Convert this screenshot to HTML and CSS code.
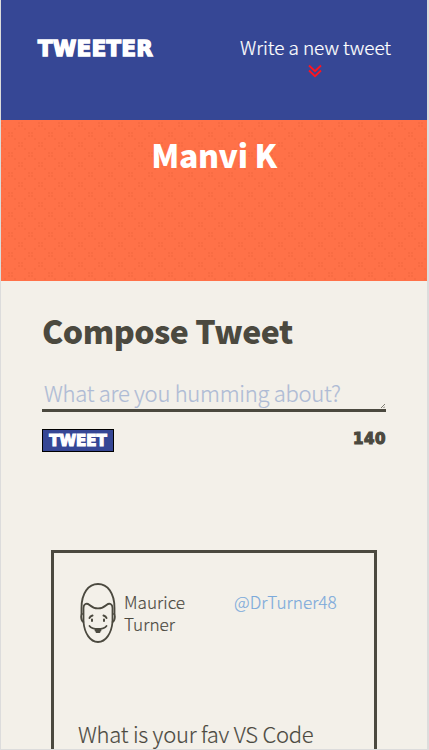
FILE: index.html
```
<!DOCTYPE html>
<html lang="en">
<head>
<meta charset="utf-8">
<title>Tweeter</title>
<link rel="stylesheet" href="styles.css">
</head>
<body>
<nav class="nav">
  <a class="logo display">TWEETER</a>
  <div class="write">
    <span class="write-label">Write a new tweet</span>
    <svg class="chevrons" viewBox="0 0 14 14"><path d="M1 1.500 7 7.200 13 1.500M1 6.500 7 12.200 13 6.500"/></svg>
  </div>
</nav>
<header class="profile">
  <svg class="pattern" width="100%" height="100%">
    <defs>
      <pattern id="weave" width="20" height="20" patternUnits="userSpaceOnUse">
        <g fill="#f3683f" opacity=".6">
          <path d="M-2-2h2v2h-2zM1-2h2v2h-2zM-2 1h2v2h-2zM1 1h2v2h-2z" transform="translate(19 4)"/>
          <path d="M-2-2h2v2h-2zM1-2h2v2h-2zM-2 1h2v2h-2zM1 1h2v2h-2z" transform="translate(-1 4)"/>
          <path d="M-2-2h2v2h-2zM1-2h2v2h-2zM-2 1h2v2h-2zM1 1h2v2h-2z" transform="translate(9 14)"/>
          <path d="M13 8h2v2h-2zM3 8h2v2h-2zM13 18h2v2h-2zM3 18h2v2h-2z"/>
        </g>
      </pattern>
    </defs>
    <rect width="100%" height="100%" fill="url(#weave)"/>
  </svg>
  <h2 class="name">Manvi K</h2>
</header>
<main class="main">
  <section class="compose">
    <h2 class="title">Compose Tweet</h2>
    <div class="field-wrap">
      <textarea class="field" placeholder="What are you humming about?"></textarea>
      <svg class="grip" viewBox="0 0 4 4"><path d="M0 4 4 0M2.500 4 4 2.500"/></svg>
    </div>
    <div class="actions">
      <button class="button display">TWEET</button>
      <output class="counter display">140</output>
    </div>
  </section>
  <article class="tweet">
    <div class="tweet-head">
      <svg class="avatar" viewBox="0 0 36 60">
        <path d="M1.500 31V25C1.500 10 8.500 1 18 1s16.500 9 16.500 24v6"/>
        <path d="M3.500 39V25c0-4 3-5.500 6-3 5 4.500 12 4.500 17 0 3-2.500 6-1 6 3v14C31.500 50 26 59 18 59S4.500 50 3.500 39Z"/>
        <path d="M2 31c-1.500 1-1 7 1.500 8M34 31c1.500 1 1 7-1.500 8"/>
        <path class="bold" d="M9.500 35c.5-1.500 1.500-2 3-2.500M26.500 35c-.5-1.500-1.500-2-3-2.500M12 36.500v1.500M24 36.500v1.500"/>
        <path d="M9.500 43c3 4 14 4 17 0M15.500 47.500h5M16.500 49h3"/>
      </svg>
      <span class="author">Maurice Turner</span>
      <span class="handle">@DrTurner48</span>
    </div>
    <p class="text">What is your fav VS Code</p>
  </article>
</main>
</body>
</html>
```
FILE: styles.css
```
* { box-sizing: border-box; }
body {
  margin: 0;
  height: 750px;
  overflow: hidden;
  display: flex;
  flex-direction: column;
  border: solid #dcdcdc;
  border-width: 0 2px 1px 1px;
  background: #f3f0e9;
  color: #4b493f;
  font-family: "Noto Sans CJK SC", "Noto Sans", sans-serif;
  font-weight: 300;
}
h2, p { margin: 0; white-space: nowrap; }
.display {
  font-family: "DejaVu Sans", sans-serif;
  font-weight: 700;
  -webkit-text-stroke: 1.600px currentColor;
}
.nav {
  flex: none;
  height: 120px;
  padding: 35px 36px 0;
  display: flex;
  justify-content: space-between;
  align-items: flex-start;
  background: #364795;
  color: #fff;
}
.logo { padding-left: 1px; font-size: 21px; line-height: 29px; letter-spacing: .6px; }
.write { display: flex; flex-direction: column; align-items: center; }
.write-label { font-size: 19px; line-height: 24px; letter-spacing: -.06px; white-space: nowrap; -webkit-text-stroke: .2px currentColor; }
.chevrons { width: 14px; height: 14px; margin-top: 5px; fill: none; stroke: #ff141f; stroke-width: 1.800; }
.profile { flex: none; position: relative; height: 161px; padding-top: 10px; background: #ff7148; color: #fff; text-align: center; }
.pattern { position: absolute; inset: 0; }
.name { position: relative; font-size: 32px; line-height: 48px; font-weight: 900; letter-spacing: -.4px; }
.main { flex: none; height: 468px; overflow: hidden; padding: 25px 41px 0; }
.compose { height: 244px; }
.title { font-size: 32px; line-height: 48px; font-weight: 900; letter-spacing: -.5px; }
.field-wrap { position: relative; width: 344px; margin-top: 23px; }
.field {
  display: block;
  width: 100%;
  height: 35px;
  padding: 0 2px;
  border: 0;
  border-bottom: 3px solid #4b493f;
  background: transparent;
  font: 300 22px/30px "Noto Sans CJK SC", sans-serif;
  letter-spacing: -.27px;
  overflow: hidden;
  resize: none;
}
.grip { position: absolute; right: 1px; bottom: 4px; width: 4px; height: 4px; fill: none; stroke: #4b493f; stroke-width: .7; }
.field::placeholder { color: #aebbd5; -webkit-text-stroke: .2px #aebbd5; }
.actions { display: flex; justify-content: space-between; align-items: flex-start; margin-top: 17px; }
.button { width: 72px; height: 23px; padding: 0; border: 1px solid #000; background: #364795; color: #fff; font-size: 15px; line-height: 20px; -webkit-text-stroke-width: 1.200px; }
.counter { padding-top: 1px; font-size: 15px; line-height: 19px; letter-spacing: .6px; -webkit-text-stroke-width: 1.200px; }
.tweet { width: 326px; height: 199px; margin-left: 9px; border: 3px solid #4b493f; border-bottom: 0; padding: 30px 24px 0; }
.tweet-head { display: flex; height: 135px; }
.avatar { flex: none; width: 36px; height: 60px; margin-left: 2px; fill: none; stroke: #4b493f; stroke-width: 1.800; stroke-linecap: round; }
.bold { stroke-width: 2; }
.author, .handle, .text { -webkit-text-stroke: .15px currentColor; }
.author { width: 110px; margin-left: 8px; padding: 8px 45px 0 0; font-size: 17.200px; line-height: 22px; }
.handle { padding-top: 8px; font-size: 17.200px; line-height: 22px; color: #7caadb; }
.text { font-size: 22px; line-height: 30px; letter-spacing: -.25px; }
```
